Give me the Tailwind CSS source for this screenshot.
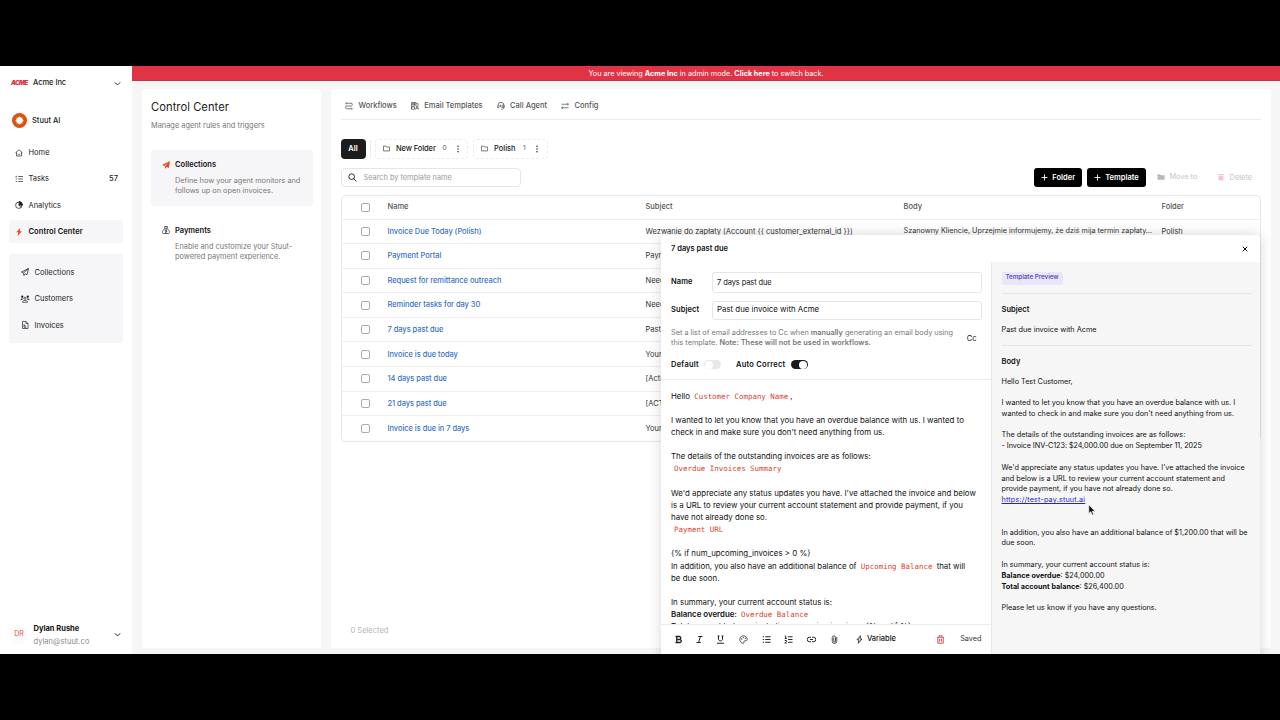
<!DOCTYPE html>
<html lang="en">
<head>
    <meta charset="UTF-8">
    <meta name="viewport" content="width=device-width, initial-scale=1.0">
    <title>Control Center - Email Templates</title>
    <script src="https://cdn.jsdelivr.net/npm/@tailwindcss/browser@4"></script>
</head>
<body class="bg-black h-screen overflow-hidden py-[66px] font-['Inter',sans-serif] text-[7.5px] text-[#222] whitespace-nowrap">
    <div class="relative flex h-[588px] overflow-hidden bg-[#f6f6f7]">

        <!-- Sidebar -->
        <aside class="w-[132px] shrink-0 bg-white flex flex-col px-[9px]">
            <div class="flex items-center h-[34px] pl-[2px] pr-[2px]">
                <span class="w-[22px] text-[6.2px] font-black italic tracking-[-0.6px] text-[#d9303e]">ACME</span>
                <span class="flex-1 font-medium tracking-[-0.05px]">Acme Inc</span>
                <svg class="size-[7px]" viewBox="0 0 12 12" fill="none" stroke="#222" stroke-width="1.700"><path d="M1.500 4l4.500 4.500L10.500 4"/></svg>
            </div>
            <div class="flex items-center h-[41px] pl-[3px] gap-[5px]">
                <svg class="size-[15px]" viewBox="0 0 30 30"><circle cx="15" cy="15" r="15" fill="#dd4f12"/><circle cx="15" cy="15" r="5.500" fill="#fff"/><g stroke="#fff" stroke-width="1.800" stroke-linecap="round"><path d="M15 8v14M8 15h14M10 10l10 10M20 10L10 20M12.300 8.500l5.400 13M17.700 8.500l-5.400 13M8.500 12.300l13 5.400M8.500 17.700l13-5.400"/></g></svg>
                <span class="pt-px font-medium">Stuut AI</span>
            </div>
            <nav class="flex flex-col gap-[2.800px]">
                <a class="flex items-center h-[23.5px] pl-[6px] pr-[5px] gap-[5.500px]">
                    <svg class="size-[8px]" viewBox="0 0 16 16" fill="none" stroke="#333" stroke-width="1.500"><path d="M1 7.500L8 1.500l7 6M3 6.500V14h10V6.500M5.500 9.500c1 2 4 2 5 0"/></svg>
                    <span>Home</span>
                </a>
                <a class="flex items-center h-[23.5px] pl-[6px] pr-[5px] gap-[5.500px]">
                    <svg class="size-[8px]" viewBox="0 0 16 16" fill="none" stroke="#333" stroke-width="1.500"><path d="M6.500 3H16M6.500 8H16M6.500 13H16M0.500 3l1.500 1.500L4.500 1.500M1.500 8h3M1.500 13h3"/></svg>
                    <span class="flex-1">Tasks</span>
                    <span class="font-medium">57</span>
                </a>
                <a class="flex items-center h-[23.5px] pl-[6px] pr-[5px] gap-[5.500px]">
                    <svg class="size-[8px]" viewBox="0 0 16 16" fill="none" stroke="#222" stroke-width="1.500"><circle cx="7.500" cy="8.500" r="6.300"/><path d="M8 1v7.500h7A7 7 0 0 0 8 1z" fill="#222"/><path d="M8 8.500l4.500 4.500"/></svg>
                    <span>Analytics</span>
                </a>
                <a class="flex items-center h-[23.5px] pl-[6px] pr-[5px] gap-[5.500px] rounded-[3px] bg-[#f6f6f8] font-semibold text-[#111]">
                    <svg class="size-[8px]" viewBox="0 0 16 16" fill="#dd4f1f"><path d="M10.500 0L2.500 8.500h4.200L5 16l9-9.500H9.500z"/></svg>
                    <span class="tracking-[0.08px]">Control Center</span>
                </a>
            </nav>
            <div class="mt-[11px] h-[88.5px] rounded-[3px] bg-[#f6f6f8] flex flex-col justify-center pl-[12px] gap-[3px]">
                <a class="flex items-center h-[23.5px] gap-[5.500px]">
                    <svg class="size-[8px]" viewBox="0 0 16 16" fill="none" stroke="#222" stroke-width="1.500"><path d="M15 1L1 8l4 2 1 5 2.500-3.500L12 13.500zM15 1L5 10"/></svg>
                    <span class="tracking-[0.05px]">Collections</span>
                </a>
                <a class="flex items-center h-[23.5px] gap-[5.500px]">
                    <svg class="size-[8px] overflow-visible" viewBox="0 0 16 16" fill="#222"><circle cx="2.500" cy="3.500" r="2.300"/><circle cx="13.500" cy="3.500" r="2.300"/><circle cx="8" cy="6.500" r="2.200" fill="none" stroke="#222" stroke-width="1.400"/><path d="M-1 10.500c0-4 5-4 5.500-2zM17 10.500c0-4-5-4-5.500-2z"/><path d="M3 14.500c0-5 10-5 10 0z" fill="none" stroke="#222" stroke-width="1.400"/></svg>
                    <span>Customers</span>
                </a>
                <a class="flex items-center h-[23.5px] gap-[5.500px]">
                    <svg class="size-[8px]" viewBox="0 0 16 16" fill="none" stroke="#333" stroke-width="1.500"><path d="M3 1h7l4 4v10H3zM10 1v4h4"/><path d="M6 6v6.500h4.500M6 8.500l4 2.500"/></svg>
                    <span>Invoices</span>
                </a>
            </div>
            <div class="mt-auto flex items-center h-[40px] pl-[1px] pr-[2px] pt-px">
                <span class="size-[18px] rounded-full bg-[#fbfafa] flex items-center justify-center text-[7px] text-[#d9593f]">DR</span>
                <span class="flex-1 pl-[5.500px] leading-[13px]">
                    <span class="block font-bold text-[#111]">Dylan Rushe</span>
                    <span class="block text-[#8a8a8a] tracking-[0.05px]">dylan@stuut.co</span>
                </span>
                <svg class="size-[7px]" viewBox="0 0 12 12" fill="none" stroke="#222" stroke-width="1.700"><path d="M1.500 4l4.500 4.500L10.500 4"/></svg>
            </div>
        </aside>

        <div class="flex-1 flex flex-col min-w-0">
            <!-- Admin banner -->
            <div class="h-[15px] shrink-0 bg-[#e03445] border-b border-[#c23643] flex items-center justify-center pt-[2px] text-white text-[7.250px]">
                <span>You are viewing <b>Acme Inc</b> in admin mode. <b>Click here</b> to switch back.</span>
            </div>

            <div class="flex-1 flex gap-[10px] pl-[10px] pr-[9px] pt-[7.500px] pb-[6px]">
                <!-- Sections -->
                <section class="w-[179px] shrink-0 bg-white rounded-[3px] px-[9px]">
                    <h1 class="mt-[11px] h-[14px] leading-[14px] text-[11.2px] tracking-[0.05px] text-[#1a1a1a]">Control Center</h1>
                    <p class="mt-[7px] h-[10px] leading-[10px] text-[7.400px] text-[#777]">Manage agent rules and triggers</p>
                    <div class="mt-[19px] w-[161.500px] h-[56.500px] rounded-[3px] bg-[#f6f6f8] pt-[9px] pl-[10.500px] flex gap-[5.500px]">
                        <svg class="size-[8px] mt-[2px]" viewBox="0 0 16 16" fill="#dd4f1f"><path d="M16 0L0 8l4.500 2L12 4 6 10.800V16l3-3.800 4.500 1.800z"/></svg>
                        <div>
                            <h2 class="font-semibold leading-[11px] tracking-[0.04px] text-[#111]">Collections</h2>
                            <p class="mt-[6px] leading-[10.700px] text-[7.300px] text-[#777]">Define how your agent monitors and<br>follows up on open invoices.</p>
                        </div>
                    </div>
                    <div class="mt-[10px] w-[161.500px] h-[56.500px] pt-[9px] pl-[10.500px] flex gap-[5.500px]">
                        <svg class="size-[8px] mt-[1px]" viewBox="0 0 16 16" fill="none" stroke="#333" stroke-width="1.500"><path d="M5 1h6L10 4.500H6zM6 4.500C3 7 1 10 1 13c0 1.500 1 2 2 2h10c1 0 2-.5 2-2 0-3-2-6-5-8.500M8 6.500v7M10 8H7c-1.500 1-.5 2 1 2.200 2 .3 2 2 0 2.300H6"/></svg>
                        <div>
                            <h2 class="font-semibold leading-[11px] text-[#111]">Payments</h2>
                            <p class="mt-[5.500px] leading-[10.700px] text-[7.350px] text-[#777]">Enable and customize your Stuut-<br>powered payment experience.</p>
                        </div>
                    </div>
                </section>

                <!-- Templates -->
                <main class="flex-1 bg-white rounded-[3px] pl-[9.500px] pr-[10px] flex flex-col">
                    <div class="h-[31px] pt-[4px] border-b border-[#ebebeb] flex items-center gap-[14px] pl-[4.500px] text-[#555] font-medium">
                        <span class="flex items-center gap-[5.500px]">
                            <svg class="size-[8px]" viewBox="0 0 16 16" fill="none" stroke="#555" stroke-width="1.500"><path d="M4 2.500h10.500M1 8h12c2-.5 2-4.500 0-5.500M3 8c-2.500 1-2.500 5 0 5.500h9"/><circle cx="2.500" cy="2.500" r="1.200"/><circle cx="13.500" cy="13.500" r="1.200"/></svg>
                            <span class="pt-px">Workflows</span>
                        </span>
                        <span class="flex items-center gap-[5.500px]">
                            <svg class="size-[8px]" viewBox="0 0 16 16" fill="none" stroke="#555" stroke-width="1.500"><path d="M1 14.500V1h9v8M1 4h9M4 1v9M7 1v8M1 10h6v4.500H1zM11 3h3v6M12 8l3.500 7M12 8l-3 7M10 12.500h4.500"/></svg>
                            <span class="pt-px">Email Templates</span>
                        </span>
                        <span class="flex items-center gap-[5.500px]">
                            <svg class="size-[8px]" viewBox="0 0 16 16" fill="none" stroke="#555" stroke-width="1.500"><path d="M2 8V6.500a6 6 0 0 1 12 0V10c0 3-2 4.500-5.500 4.500M4 6v5H1.500V7.500M10.500 6H14v5h-3.500zM7 5.500v4h2.500"/></svg>
                            <span class="pt-px">Call Agent</span>
                        </span>
                        <span class="flex items-center gap-[5.500px]">
                            <svg class="size-[8px]" viewBox="0 0 16 16" fill="none" stroke="#555" stroke-width="1.500"><path d="M1 4.500h14M12 1.500l3 3-3 2M15 11.500H1M4 9l-3 2.500 3 3"/></svg>
                            <span class="pt-px">Config</span>
                        </span>
                    </div>

                    <div class="mt-[19px] h-[20px] flex items-center text-[#222]">
                        <span class="w-[25px] h-[20px] rounded-[4px] bg-[#1d1c1d] text-white font-semibold flex items-center justify-center">All</span>
                        <span class="ml-[4.500px] h-[18px] border-l border-[#ececec]"></span>
                        <span class="ml-[4px] w-[93px] h-[20px] rounded-[4px] border border-dashed border-[#ececec] flex items-center pl-[7px]">
                            <svg class="size-[7px]" viewBox="0 0 16 16" fill="none" stroke="#444" stroke-width="1.600"><path d="M1 13.500v-11h5l1.500 2H15v9z"/></svg>
                            <span class="ml-[6px] w-[46.500px] font-medium tracking-[-0.1px]">New Folder</span>
                            <span class="w-[10px] text-[6.500px] text-[#555] pt-px">0</span>
                            <svg class="ml-[3px] w-[4px] h-[8px]" viewBox="0 0 4 8" fill="#333"><circle cx="2" cy="1.200" r=".8"/><circle cx="2" cy="4" r=".8"/><circle cx="2" cy="6.800" r=".8"/></svg>
                        </span>
                        <span class="ml-[5px] w-[74.500px] h-[20px] rounded-[4px] border border-dashed border-[#ececec] flex items-center pl-[7px]">
                            <svg class="size-[7px]" viewBox="0 0 16 16" fill="none" stroke="#444" stroke-width="1.600"><path d="M1 13.500v-11h5l1.500 2H15v9z"/></svg>
                            <span class="ml-[6px] w-[29px] font-medium">Polish</span>
                            <span class="w-[9px] text-[6.500px] text-[#555] pt-px">1</span>
                            <svg class="ml-[3px] w-[4px] h-[8px]" viewBox="0 0 4 8" fill="#333"><circle cx="2" cy="1.200" r=".8"/><circle cx="2" cy="4" r=".8"/><circle cx="2" cy="6.800" r=".8"/></svg>
                        </span>
                    </div>

                    <div class="mt-[9px] h-[19.500px] flex items-center">
                        <div class="w-[180.500px] h-[19.500px] rounded-[4px] border border-[#e6e6e6] flex items-center pl-[6px] gap-[7px] text-[#999]">
                            <svg class="size-[9px]" viewBox="0 0 16 16" fill="none" stroke="#222" stroke-width="1.700"><circle cx="6.500" cy="6.500" r="5"/><path d="M10 10l5 5"/></svg>
                            <span class="pt-px text-[7.350px]">Search by template name</span>
                        </div>
                        <span class="ml-auto w-[48px] h-[19.500px] rounded-[3px] bg-black text-white font-semibold flex items-center justify-center gap-[4.500px]">
                            <svg class="size-[7px]" viewBox="0 0 14 14" stroke="#fff" stroke-width="1.800"><path d="M7 1v12M1 7h12"/></svg>Folder
                        </span>
                        <span class="ml-[5px] w-[58.500px] h-[19.500px] rounded-[3px] bg-black text-white font-semibold flex items-center justify-center gap-[4.500px]">
                            <svg class="size-[7px]" viewBox="0 0 14 14" stroke="#fff" stroke-width="1.800"><path d="M7 1v12M1 7h12"/></svg>Template
                        </span>
                        <span class="ml-[11.500px] w-[60px] flex items-center gap-[4.500px] text-[#c4c4c4] text-[7.300px]">
                            <svg class="size-[8px]" viewBox="0 0 16 16" fill="#b9b9b9"><path d="M1 13.500v-11h5l1.500 2H15v9z"/></svg>Move to
                        </span>
                        <span class="w-[44px] flex items-center gap-[4.500px] text-[#c4c4c4]">
                            <svg class="size-[8px]" viewBox="0 0 16 16" fill="#f5c6cf"><path d="M2 2h12v2H2zM3 5h10v10H3z"/></svg>Delete
                        </span>
                    </div>

                    <!-- Template table -->
                    <div class="mt-[7.500px] w-[920px] rounded-[5px] border border-[#e8e8e8]">
                        <div class="grid grid-cols-[46px_258px_258px_258px_1fr] items-center h-[24px] border-b border-[#efefef] text-[#555] font-medium">
                            <span class="ml-[19px] size-[9px] rounded-[2px] border border-[#aaa]"></span><span>Name</span><span>Subject</span><span>Body</span><span>Folder</span>
                        </div>
                        <div id="rows"></div>
                    </div>

                    <div class="mt-auto mb-[12.500px] h-[10px] leading-[10px] pl-[10px] text-[#b5b5b5]">0 Selected</div>
                </main>
            </div>
        </div>

        <!-- Template editor -->
        <div class="absolute left-[661px] top-[169px] w-[599px] h-[440px] bg-white rounded-t-[4px] shadow-[0_0_14px_rgba(0,0,0,0.16)] flex flex-col text-[#111]">
            <div class="h-[27px] shrink-0 flex items-center justify-between pl-[10px] pr-[12px]">
                <span class="font-semibold">7 days past due</span>
                <svg class="size-[6px]" viewBox="0 0 12 12" stroke="#111" stroke-width="2"><path d="M1.500 1.500l9 9M10.500 1.500l-9 9"/></svg>
            </div>
            <div class="flex flex-1 min-h-0">
                <div class="w-[330.500px] border-r border-[#e9e9e9] flex flex-col">
                    <div class="h-[118px] shrink-0 border-b border-[#ebebeb] pl-[10px] pr-[9px] pt-[9.500px]">
                        <div class="flex items-center h-[21px]">
                            <span class="w-[41px] font-semibold tracking-[0.1px]">Name</span>
                            <span class="flex-1 h-[21px] rounded-[3px] border border-[#e6e6e6] flex items-center pl-[4px] pt-[2px] tracking-[-0.1px]">7 days past due</span>
                        </div>
                        <div class="mt-[8px] flex items-center h-[19px]">
                            <span class="w-[41px] font-semibold tracking-[0.1px]">Subject</span>
                            <span class="flex-1 h-[19px] rounded-[3px] border border-[#e6e6e6] flex items-center pl-[4px] text-[7.850px]">Past due invoice with Acme</span>
                        </div>
                        <div class="mt-[8px] flex items-center justify-between pr-[5px]">
                            <p class="leading-[10.700px] text-[7.300px] text-[#777]">Set a list of email addresses to Cc when <b class="font-semibold">manually</b> generating an email body using<br>this template. <b class="font-semibold tracking-[0.06px]">Note: These will not be used in workflows.</b></p>
                            <span>Cc</span>
                        </div>
                        <div class="mt-[11px] flex items-center h-[10px] font-semibold">
                            <span class="tracking-[0.25px]">Default</span>
                            <span class="ml-[5px] w-[17px] h-[9px] rounded-full bg-[#e8e8e8] flex items-center pl-[1px]"><span class="size-[8px] rounded-full bg-white"></span></span>
                            <span class="ml-[15px] tracking-[0.25px]">Auto Correct</span>
                            <span class="ml-[5px] w-[17px] h-[9px] rounded-full bg-[#1b1b1b] flex items-center justify-end pr-[1px]"><span class="size-[7.500px] rounded-full bg-white"></span></span>
                        </div>
                    </div>
                    <div class="h-[244px] shrink-0 overflow-hidden pl-[10px] pt-[9.500px] text-[7.880px] leading-[12.150px] [&_code]:leading-none [&_code]:font-['DejaVu_Sans_Mono',monospace] [&_code]:text-[7.450px] [&_code]:text-[#d9452f] [&_p]:h-[12.150px] [&_p]:overflow-visible">
                        <p>Hello <code class="mx-[2px]">Customer Company Name</code>,</p>
                        <br>
                        <p>I wanted to let you know that you have an overdue balance with us. I wanted to</p>
                        <p>check in and make sure you don't need anything from us.</p>
                        <br>
                        <p>The details of the outstanding invoices are as follows:</p>
                        <p><code class="mx-[3px]">Overdue Invoices Summary</code></p>
                        <br>
                        <p>We'd appreciate any status updates you have. I've attached the invoice and below</p>
                        <p>is a URL to review your current account statement and provide payment, if you</p>
                        <p>have not already done so.</p>
                        <p><code class="mx-[3px]">Payment URL</code></p>
                        <br>
                        <p>{% if num_upcoming_invoices &gt; 0 %}</p>
                        <p>In addition, you also have an additional balance of <code class="mx-[2px]">Upcoming Balance</code> that will</p>
                        <p>be due soon.</p>
                        <br>
                        <p>In summary, your current account status is:</p>
                        <p><b class="font-semibold">Balance overdue</b>: <code class="mx-[2px]">Overdue Balance</code></p>
                        <p>Total account balance including upcoming invoices: {% endif %}</p>
                    </div>
                    <!-- Toolbar -->
                    <div class="h-[29px] shrink-0 border-t border-[#ebebeb] flex items-center pl-[13px] pr-[9px]">
                        <svg class="size-[9px]" viewBox="0 0 18 18" fill="none" stroke="#222" stroke-width="2.600"><path d="M3 3h7.500a3 3 0 0 1 0 6H5.500M5.500 3v12M3 15h8.500a3 3 0 0 0 0-6"/></svg>
                        <svg class="ml-[12px] size-[9px]" viewBox="0 0 18 18" fill="none" stroke="#222" stroke-width="2"><path d="M6.500 3H15M3 15h8.500M11 3L7 15"/></svg>
                        <svg class="ml-[12px] size-[9px]" viewBox="0 0 18 18" fill="none" stroke="#222" stroke-width="2"><path d="M3 2h4M11 2h4M5 2v6c0 5 8 5 8 0V2M2 16.500h14"/></svg>
                        <svg class="ml-[14px] size-[9px]" viewBox="0 0 18 18" fill="none" stroke="#333" stroke-width="1.600"><path d="M9 1.500C4.500 1.500 1.500 5 1.500 9s3 7.500 7 7.500c2.500 0 .5-3 2-4.500s6 .5 6-3.500c0-4-3.500-7-7.500-7z"/><circle cx="5.500" cy="8" r=".7"/><circle cx="8.500" cy="5" r=".7"/><circle cx="12.500" cy="6.500" r=".7"/></svg>
                        <svg class="ml-[14px] size-[9px]" viewBox="0 0 18 18" fill="none" stroke="#222" stroke-width="2"><path d="M6.500 3.500H17M6.500 9H17M6.500 14.500H17M1.500 3.500h2.500M1.500 9h2.500M1.500 14.500h2.500"/></svg>
                        <svg class="ml-[13px] size-[9px]" viewBox="0 0 18 18" fill="none" stroke="#222" stroke-width="1.900"><path d="M8 3.500h9M8 9h9M8 14.500h9M1.500 2h2v5M1.500 7h4M1.500 11h3.500v2L1.500 16h4"/></svg>
                        <svg class="ml-[14px] size-[9px]" viewBox="0 0 18 18" fill="none" stroke="#222" stroke-width="2"><path d="M8 4.500H5a4.200 4.200 0 0 0 0 9h3M10 4.500h3a4.200 4.200 0 0 1 0 9h-3M6 9h6"/></svg>
                        <svg class="ml-[14px] size-[9px]" viewBox="0 0 18 18" fill="none" stroke="#333" stroke-width="1.700"><path d="M13.500 4v8.500a4.500 4.500 0 0 1-9 0V5a3.200 3.200 0 0 1 6.500 0v7.500a1.700 1.700 0 0 1-3.500 0V5"/></svg>
                        <svg class="ml-[16px] size-[9px]" viewBox="0 0 18 18" fill="none" stroke="#222" stroke-width="1.700"><path d="M11 1.500L4 9.500h4L6.500 16.500 14 8H10z"/></svg>
                        <span class="ml-[3px] font-medium tracking-[-0.05px]">Variable</span>
                        <svg class="ml-auto size-[9px]" viewBox="0 0 18 18" fill="#fbdfe4" stroke="#d94560" stroke-width="1.700"><path d="M3.500 4.500v12h11v-12M2 4.500h14M6 4V1.500h6V4M7 8v5M11 8v5"/></svg>
                        <span class="ml-[15px] text-[7.300px] text-[#333]">Saved</span>
                    </div>
                </div>

                <!-- Preview -->
                <div class="flex-1 bg-[#f6f6f6] pl-[10px] pr-[8px] pt-[9.500px]">
                    <div class="w-[61px] h-[13px] rounded-[3px] bg-[#e9e6f7] flex items-center justify-center text-[6.300px] font-semibold tracking-[-0.05px] text-[#6554c8]">Template Preview</div>
                    <div class="mt-[8.500px] border-t border-[#e6e6e6] pt-[10px]">
                        <h3 class="font-semibold leading-[11px] tracking-[0.05px]">Subject</h3>
                        <p class="mt-[9px] leading-[11px] text-[7.300px]">Past due invoice with Acme</p>
                    </div>
                    <div class="mt-[9.500px] border-t border-[#e6e6e6] pt-[10px]">
                        <h3 class="font-semibold leading-[11px] tracking-[0.05px]">Body</h3>
                        <div class="mt-[10px] text-[7.250px] leading-[10.800px]">
                            <p>Hello Test Customer,</p>
                            <br>
                            <p>I wanted to let you know that you have an overdue balance with us. I<br>wanted to check in and make sure you don't need anything from us.</p>
                            <br>
                            <p>The details of the outstanding invoices are as follows:<br><span class="tracking-[-0.06px]">- Invoice INV-C123: $24,000.00 due on September 11, 2025</span></p>
                            <br>
                            <p>We'd appreciate any status updates you have. I've attached the invoice<br>and below is a URL to review your current account statement and<br>provide payment, if you have not already done so.</p>
                            <p><a class="underline text-[#2a1fc4] tracking-[0.16px]">https://test-pay.stuut.ai</a></p>
                            <br><br>
                            <p>In addition, you also have an additional balance of $1,200.00 that will be<br>due soon.</p>
                            <br>
                            <p>In summary, your current account status is:</p>
                            <p><b>Balance overdue</b>: $24,000.00</p>
                            <p><b>Total account balance</b>: $26,400.00</p>
                            <br>
                            <p>Please let us know if you have any questions.</p>
                        </div>
                    </div>
                </div>
            </div>
        </div>

        <!-- Mouse pointer -->
        <svg class="absolute left-[1088px] top-[438px] w-[8px] h-[12px]" viewBox="0 0 8 12" fill="#111" stroke="#fff" stroke-width=".6"><path d="M.8.8v8.700l2-1.800 1.400 3.300 1.400-.6-1.400-3.200h2.800z"/></svg>
    </div>

    <script>
        const templates = [
            ['Invoice Due Today (Polish)', 'Wezwanie do zapłaty (Account {{ customer_external_id }})', 'Szanowny Kliencie, Uprzejmie informujemy, że dziś mija termin zapłaty…', 'Polish'],
            ['Payment Portal', 'Payment Portal', '', ''],
            ['Request for remittance outreach', 'Need remittance', '', ''],
            ['Reminder tasks for day 30', 'Need remittance', '', ''],
            ['7 days past due', 'Past due invoice', '', ''],
            ['Invoice is due today', 'Your invoice', '', ''],
            ['14 days past due', '[Action required]', '', ''],
            ['21 days past due', '[ACTION REQUIRED]', '', ''],
            ['Invoice is due in 7 days', 'Your invoice', '', '']
        ];

        document.getElementById('rows').innerHTML = templates.map(([name, subject, body, folder]) => `
            <div class="grid grid-cols-[46px_258px_258px_258px_1fr] items-center h-[24.600px] border-b border-[#efefef] last:border-b-0 text-[#333]">
                <span class="ml-[19px] size-[9px] rounded-[2px] border border-[#aaa]"></span>
                <a class="text-[#3a72c4] font-medium tracking-[-0.05px]">${name}</a>
                <span>${subject}</span>
                <span class="text-[7.250px]">${body}</span>
                <span>${folder}</span>
            </div>`).join('');
    </script>
</body>
</html>
